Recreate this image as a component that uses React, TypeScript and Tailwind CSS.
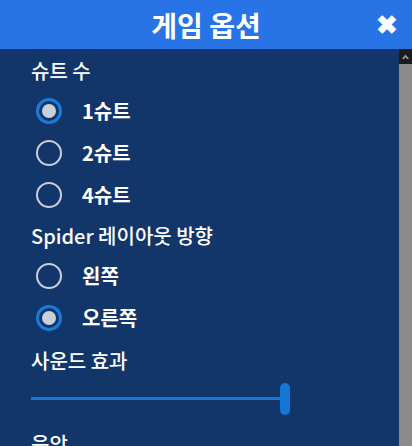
import React, { useState } from "react";

const font = { fontFamily: '"Noto Sans CJK KR", "Noto Sans", sans-serif' };

function Radio({ checked, label, onClick }: { checked: boolean; label: string; onClick: () => void }) {
  return (
    <div className="flex items-center h-[42px] cursor-pointer" onClick={onClick}>
      <div
        className={
          checked
            ? "w-[26px] h-[26px] rounded-full border-[3px] border-[#1b7bd6] flex items-center justify-center ml-[5px]"
            : "w-[26px] h-[26px] rounded-full border-[2.5px] border-[#c9ced8] ml-[5px]"
        }
      >
        {checked && <div className="w-[14px] h-[14px] rounded-full bg-[#c9d0dc]" />}
      </div>
      <span className="ml-[20px] text-[20px] font-bold text-white leading-none">{label}</span>
    </div>
  );
}

export default function App() {
  const [suit, setSuit] = useState(1);
  const [dir, setDir] = useState("right");
  return (
    <div className="w-[412px] h-[446px] overflow-hidden flex flex-col bg-[#12366a]" style={font}>
      <div className="h-[49px] bg-[#2874e6] flex items-center justify-center relative shrink-0">
        <span className="text-white text-[28px] font-bold leading-none">게임 옵션</span>
        <span className="absolute right-[14px] top-[10px] text-white text-[26px] font-bold leading-none">✖</span>
      </div>
      <div className="flex flex-1 min-h-0">
        <div className="flex-1 pl-[31px] pt-[10px]">
          <div className="text-white text-[20px] font-medium leading-[24px]">슈트 수</div>
          <div className="mt-[7px]">
            <Radio checked={suit === 1} label="1슈트" onClick={() => setSuit(1)} />
            <Radio checked={suit === 2} label="2슈트" onClick={() => setSuit(2)} />
            <Radio checked={suit === 4} label="4슈트" onClick={() => setSuit(4)} />
          </div>
          <div className="text-white text-[20px] font-medium leading-[24px] mt-[8px]">Spider 레이아웃 방향</div>
          <div className="mt-[7px]">
            <Radio checked={dir === "left"} label="왼쪽" onClick={() => setDir("left")} />
            <Radio checked={dir === "right"} label="오른쪽" onClick={() => setDir("right")} />
          </div>
          <div className="text-white text-[20px] font-medium leading-[24px] mt-[10px]">사운드 효과</div>
          <div className="relative h-[40px] w-[260px] mt-[6px]">
            <div className="absolute left-0 top-[18px] h-[3px] w-[254px] bg-[#1576d3]" />
            <div className="absolute left-[249px] top-[4px] h-[32px] w-[10px] rounded-full bg-[#1576d3]" />
          </div>
          <div className="text-white text-[20px] font-medium leading-[24px] mt-[13px]">음악</div>
        </div>
        <div className="w-[13px] flex flex-col shrink-0">
          <div className="h-[15px] bg-[#1c1c1c] flex items-center justify-center">
            <svg width="7" height="5" viewBox="0 0 7 5">
              <path d="M0 5 L3.5 0.5 L7 5 L5 5 L3.5 3 L2 5 Z" fill="#a0a0a0" />
            </svg>
          </div>
          <div className="flex-1 bg-[#8a8a8a]" />
        </div>
      </div>
    </div>
  );
}
